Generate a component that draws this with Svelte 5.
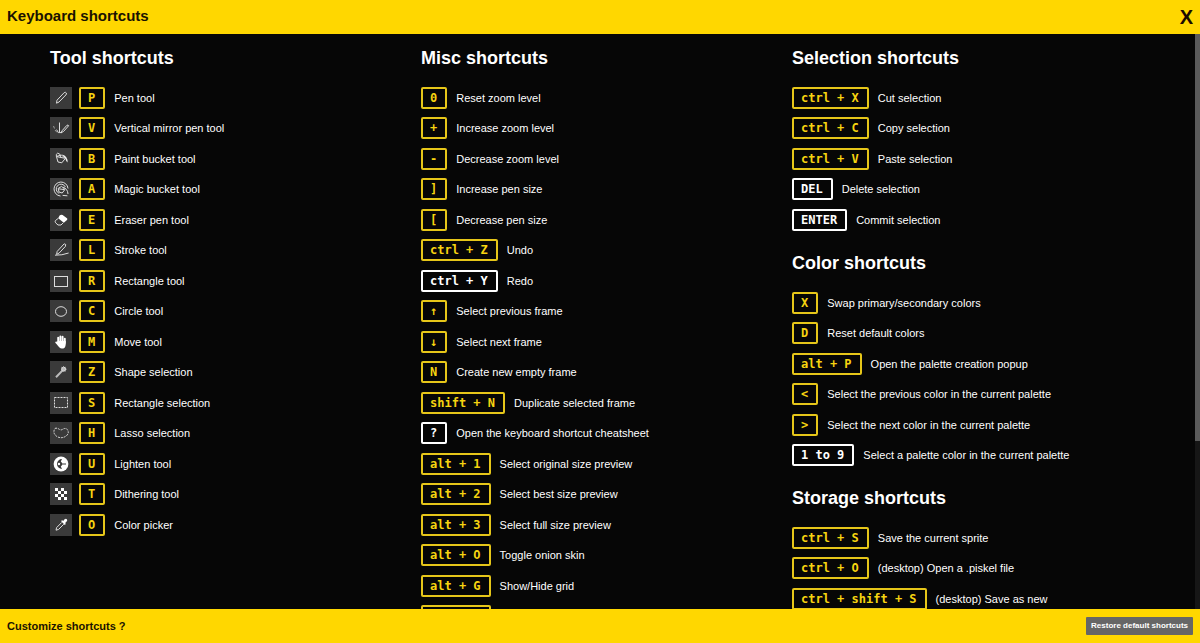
<script>
  let viewHeight = $state(575);
  let contentHeight = $state(814);
  let scrollTop = $state(0);

  const tools = [
    ['pen', 'P', 'Pen tool'],
    ['mirror', 'V', 'Vertical mirror pen tool'],
    ['bucket', 'B', 'Paint bucket tool'],
    ['magic', 'A', 'Magic bucket tool'],
    ['eraser', 'E', 'Eraser pen tool'],
    ['stroke', 'L', 'Stroke tool'],
    ['rect', 'R', 'Rectangle tool'],
    ['circle', 'C', 'Circle tool'],
    ['move', 'M', 'Move tool'],
    ['wand', 'Z', 'Shape selection'],
    ['rectselect', 'S', 'Rectangle selection'],
    ['lasso', 'H', 'Lasso selection'],
    ['lighten', 'U', 'Lighten tool'],
    ['dither', 'T', 'Dithering tool'],
    ['picker', 'O', 'Color picker']
  ].map(([icon, key, label]) => ({ icon, key, label }));

  const list = (rows) => rows.map(([key, label, fixed]) => ({ key, label, fixed }));

  const misc = list([
    ['0', 'Reset zoom level'],
    ['+', 'Increase zoom level'],
    ['-', 'Decrease zoom level'],
    [']', 'Increase pen size'],
    ['[', 'Decrease pen size'],
    ['ctrl + Z', 'Undo'],
    ['ctrl + Y', 'Redo', true],
    ['↑', 'Select previous frame'],
    ['↓', 'Select next frame'],
    ['N', 'Create new empty frame'],
    ['shift + N', 'Duplicate selected frame'],
    ['?', 'Open the keyboard shortcut cheatsheet', true],
    ['alt + 1', 'Select original size preview'],
    ['alt + 2', 'Select best size preview'],
    ['alt + 3', 'Select full size preview'],
    ['alt + O', 'Toggle onion skin'],
    ['alt + G', 'Show/Hide grid'],
    ['alt + L', 'Toggle layer preview']
  ]);

  const selection = list([
    ['ctrl + X', 'Cut selection'],
    ['ctrl + C', 'Copy selection'],
    ['ctrl + V', 'Paste selection'],
    ['DEL', 'Delete selection', true],
    ['ENTER', 'Commit selection', true]
  ]);

  const color = list([
    ['X', 'Swap primary/secondary colors'],
    ['D', 'Reset default colors'],
    ['alt + P', 'Open the palette creation popup'],
    ['<', 'Select the previous color in the current palette'],
    ['>', 'Select the next color in the current palette'],
    ['1 to 9', 'Select a palette color in the current palette', true]
  ]);

  const storage = list([
    ['ctrl + S', 'Save the current sprite'],
    ['ctrl + O', '(desktop) Open a .piskel file'],
    ['ctrl + shift + S', '(desktop) Save as new']
  ]);

  const columns = [
    [{ title: 'Tool shortcuts', items: tools }],
    [{ title: 'Misc shortcuts', items: misc }],
    [
      { title: 'Selection shortcuts', items: selection },
      { title: 'Color shortcuts', items: color },
      { title: 'Storage shortcuts', items: storage }
    ]
  ];

  // White squares of the dithering checkerboard
  const checks = [];
  for (let y = 0; y < 4; y++) {
    for (let x = 0; x < 4; x++) if ((x + y) % 2 === 0) checks.push([x, y]);
  }
</script>

{#snippet icon(name)}
  <svg class="icon" viewBox="0 0 22 22" aria-hidden="true">
    {#if name === 'pen'}
      <path d="M6.5 16.2 L7 13.2 L14.2 5.6 Q15.6 4.8 16.3 6 Q16.8 7 15.8 8 L9 15 Z" />
    {:else if name === 'mirror'}
      <path d="M9.5 5.5 V15 M12 13.8 L16.8 8.4 Q18.4 7.4 18.6 8.8 L13.6 14.4 L11 15.8 Z M6.6 12.6 L8.4 15.6 H12" />
      <path d="M3.5 9 L4.5 11.5 M5 13 L7 15.4" opacity=".6" />
    {:else if name === 'bucket'}
      <path d="M6.4 8.4 L11.6 7 L15.2 10.6 L11.8 14.8 L8 14 Z M6.4 8.4 Q5.6 6 7.6 5.2 Q10.2 4.8 11 9.6 M6.6 8.6 L14.6 10.2" />
      <path d="M12 6.4 Q17.8 7.6 17.6 14.6 Q16 13.6 15.4 10.8 Z" fill="#eee" stroke="none" />
    {:else if name === 'magic'}
      <path d="M18 10.5 A7 7 0 1 0 10.5 18 M15.4 9 A4.8 4.8 0 1 0 9.2 15.4 M8.2 10.4 L11.6 8.4 L15 11.4 L12.2 15 L9 14 Z M8.6 10.8 L14.4 11.6 M13 9.2 Q17.6 10.6 18 16 M12.6 17.4 L17.4 17.8" />
    {:else if name === 'eraser'}
      <path d="M9.6 6.6 Q11 5.2 12.6 6 L17 9.2 Q17.8 10 17 11 L13.8 13.8 L8.2 9.2 Z" fill="#fff" stroke="none" />
      <path d="M8.2 9.4 L5.4 11.6 Q4.8 12.8 5.6 13.8 L8 16 H11 L13.2 13.8" />
    {:else if name === 'stroke'}
      <path d="M6.6 15.4 L7.2 12.4 L14.2 4.8 Q16.6 4.8 15.4 7.4 L9.2 14 Z M5 16.2 Q12 16.4 18.6 14" />
    {:else if name === 'rect'}
      <rect x="4.5" y="6.5" width="13" height="10" />
    {:else if name === 'circle'}
      <ellipse cx="11" cy="11.5" rx="5.5" ry="4.8" />
    {:else if name === 'move'}
      <g stroke="#fff" stroke-width="1.9" stroke-linecap="round">
        <path d="M8.2 11 V6.6 M10.4 11 V5.4 M12.6 11 V5.8 M14.8 12 V7.8 M6.2 11.4 L9 14.4" />
      </g>
      <path d="M7.4 10 H15.7 V13.4 Q15.6 17.6 11.6 17.6 Q9.6 17.4 7.8 14.6 Z" fill="#fff" stroke="none" />
    {:else if name === 'wand'}
      <path d="M6 16.2 L12.6 9.4" stroke-width="2" stroke="#bbb" />
      <circle cx="13.6" cy="8.2" r="2" fill="#bbb" />
      <path d="M13.6 5 V6 M16.8 8.2 H15.8 M11.2 6 L12 6.8 M16 5.8 L15.2 6.6 M16 10.6 L15.2 9.8" opacity=".6" />
    {:else if name === 'rectselect'}
      <rect x="4.5" y="5.5" width="13" height="10" stroke-dasharray="2 1" />
    {:else if name === 'lasso'}
      <path d="M5 6.4 Q7 5.6 9.4 7.4 Q11.4 8.4 12.8 7.2 Q15.4 5.6 17.4 7.6 Q19.6 11 16.4 13.8 Q12 17 7.4 14.8 Q2 11.4 5 6.4 Z" stroke-dasharray="2 1" />
    {:else if name === 'lighten'}
      <circle cx="11" cy="11" r="7.4" fill="#fff" stroke="none" />
      <path d="M12 6 A5 5 0 1 0 12 16 L10.8 13.4 L13 11 L10.8 8.6 Z" fill="#3a3a3a" stroke="none" />
      <circle cx="9" cy="11" r="1.2" fill="#fff" stroke="none" />
      <path d="M13 11 H16" stroke="#3a3a3a" />
    {:else if name === 'dither'}
      {#each checks as [x, y]}
        <rect x={5 + x * 3} y={5 + y * 3} width="3" height="3" fill="#fff" stroke="none" />
      {/each}
    {:else if name === 'picker'}
      <path d="M11.8 8.4 L6.6 13.6 L6 16.2 L8.6 15.4 L13.8 10.2" />
      <path d="M11 7 L12.2 6.2 L13.2 7 L14.6 5.2 Q16.2 4.4 17 5.4 Q17.6 6.6 16.6 7.6 L15.2 9 L15.8 10 L14.8 11 Z" fill="#fff" stroke="none" />
    {/if}
  </svg>
{/snippet}

<div class="cheatsheet">
  <header class="bar">
    <h1>Keyboard shortcuts</h1>
    <button class="close" type="button" aria-label="Close">X</button>
  </header>

  <div class="body">
    <main bind:clientHeight={viewHeight} onscroll={(e) => (scrollTop = e.currentTarget.scrollTop)}>
      <div class="columns" bind:offsetHeight={contentHeight}>
        {#each columns as sections}
          <div class="column">
            {#each sections as section}
              <section>
                <h2>{section.title}</h2>
                <ul>
                  {#each section.items as item}
                    <li>
                      {#if item.icon}{@render icon(item.icon)}{/if}
                      {#if item.fixed}
                        <kbd class="key fixed">{item.key}</kbd>
                      {:else}
                        <button class="key" type="button">{item.key}</button>
                      {/if}
                      <span class="label">{item.label}</span>
                    </li>
                  {/each}
                </ul>
              </section>
            {/each}
          </div>
        {/each}
      </div>
    </main>
    <div class="rail">
      <div
        class="thumb"
        style="height: {(viewHeight / contentHeight) * 100}%; margin-top: {(scrollTop * viewHeight) / contentHeight}px"
      ></div>
    </div>
  </div>

  <footer class="bar">
    <span class="customize">Customize shortcuts ?</span>
    <button class="restore" type="button">Restore default shortcuts</button>
  </footer>
</div>

<style>
  :global(body) {
    margin: 0;
    background: #060606;
  }

  .cheatsheet {
    display: flex;
    flex-direction: column;
    height: 100vh;
    font-family: 'Liberation Sans', Arial, sans-serif;
    color: #fff;
    background: #060606;
  }

  button {
    margin: 0;
    border: 0;
    font: inherit;
    cursor: pointer;
  }

  .bar {
    flex: none;
    display: flex;
    align-items: center;
    justify-content: space-between;
    height: 34px;
    padding: 0 7px;
    background: #ffd700;
    color: #1a1200;
  }

  h1 {
    margin: 0;
    font-size: 15px;
    line-height: 32px;
    padding-bottom: 2px;
  }

  .close {
    padding: 0;
    background: none;
    color: #1a0a00;
    font-size: 20px;
    font-weight: bold;
    line-height: 34px;
  }

  .body {
    flex: 1;
    display: flex;
    min-height: 0;
  }

  main {
    flex: 1;
    overflow-y: auto;
    scrollbar-width: none;
  }

  .columns {
    display: grid;
    grid-template-columns: repeat(3, 1fr);
    box-sizing: border-box;
    padding: 12px 32px 220px 50px;
  }

  .rail {
    flex: none;
    width: 5px;
    background: #161616;
  }

  .thumb {
    background: #5a5a5a;
  }

  section + section {
    margin-top: 20px;
  }

  h2 {
    margin: 0 0 17px;
    font-size: 18px;
    line-height: 24px;
  }

  ul {
    margin: 0;
    padding: 0;
    list-style: none;
  }

  li {
    display: flex;
    align-items: center;
    height: 22px;
    white-space: nowrap;
  }

  li + li {
    margin-top: 9px;
  }

  li:nth-child(even) {
    margin-top: 8px;
  }

  .icon {
    flex: none;
    width: 22px;
    height: 22px;
    margin-right: 7px;
    background: #3a3a3a;
    fill: none;
    stroke: #ddd;
    stroke-width: 1;
  }

  .key {
    box-sizing: border-box;
    min-width: 26px;
    height: 22px;
    padding: 0 8px 0 7px;
    border: 2px solid #e6c619;
    border-radius: 2px;
    background: none;
    color: #f6d410;
    font-family: 'DejaVu Sans Mono', monospace;
    font-size: 12px;
    font-weight: bold;
    line-height: 18px;
    text-align: center;
  }

  .fixed {
    border-color: #fff;
    color: #fff;
  }

  .label {
    margin-left: 9px;
    font-size: 11px;
    line-height: 22px;
  }

  .customize {
    font-size: 11px;
    font-weight: bold;
  }

  .restore {
    height: 18px;
    padding: 0 5px;
    border-radius: 1px;
    background: #666;
    color: #fff;
    font-size: 8px;
    font-weight: bold;
    line-height: 18px;
  }
</style>
